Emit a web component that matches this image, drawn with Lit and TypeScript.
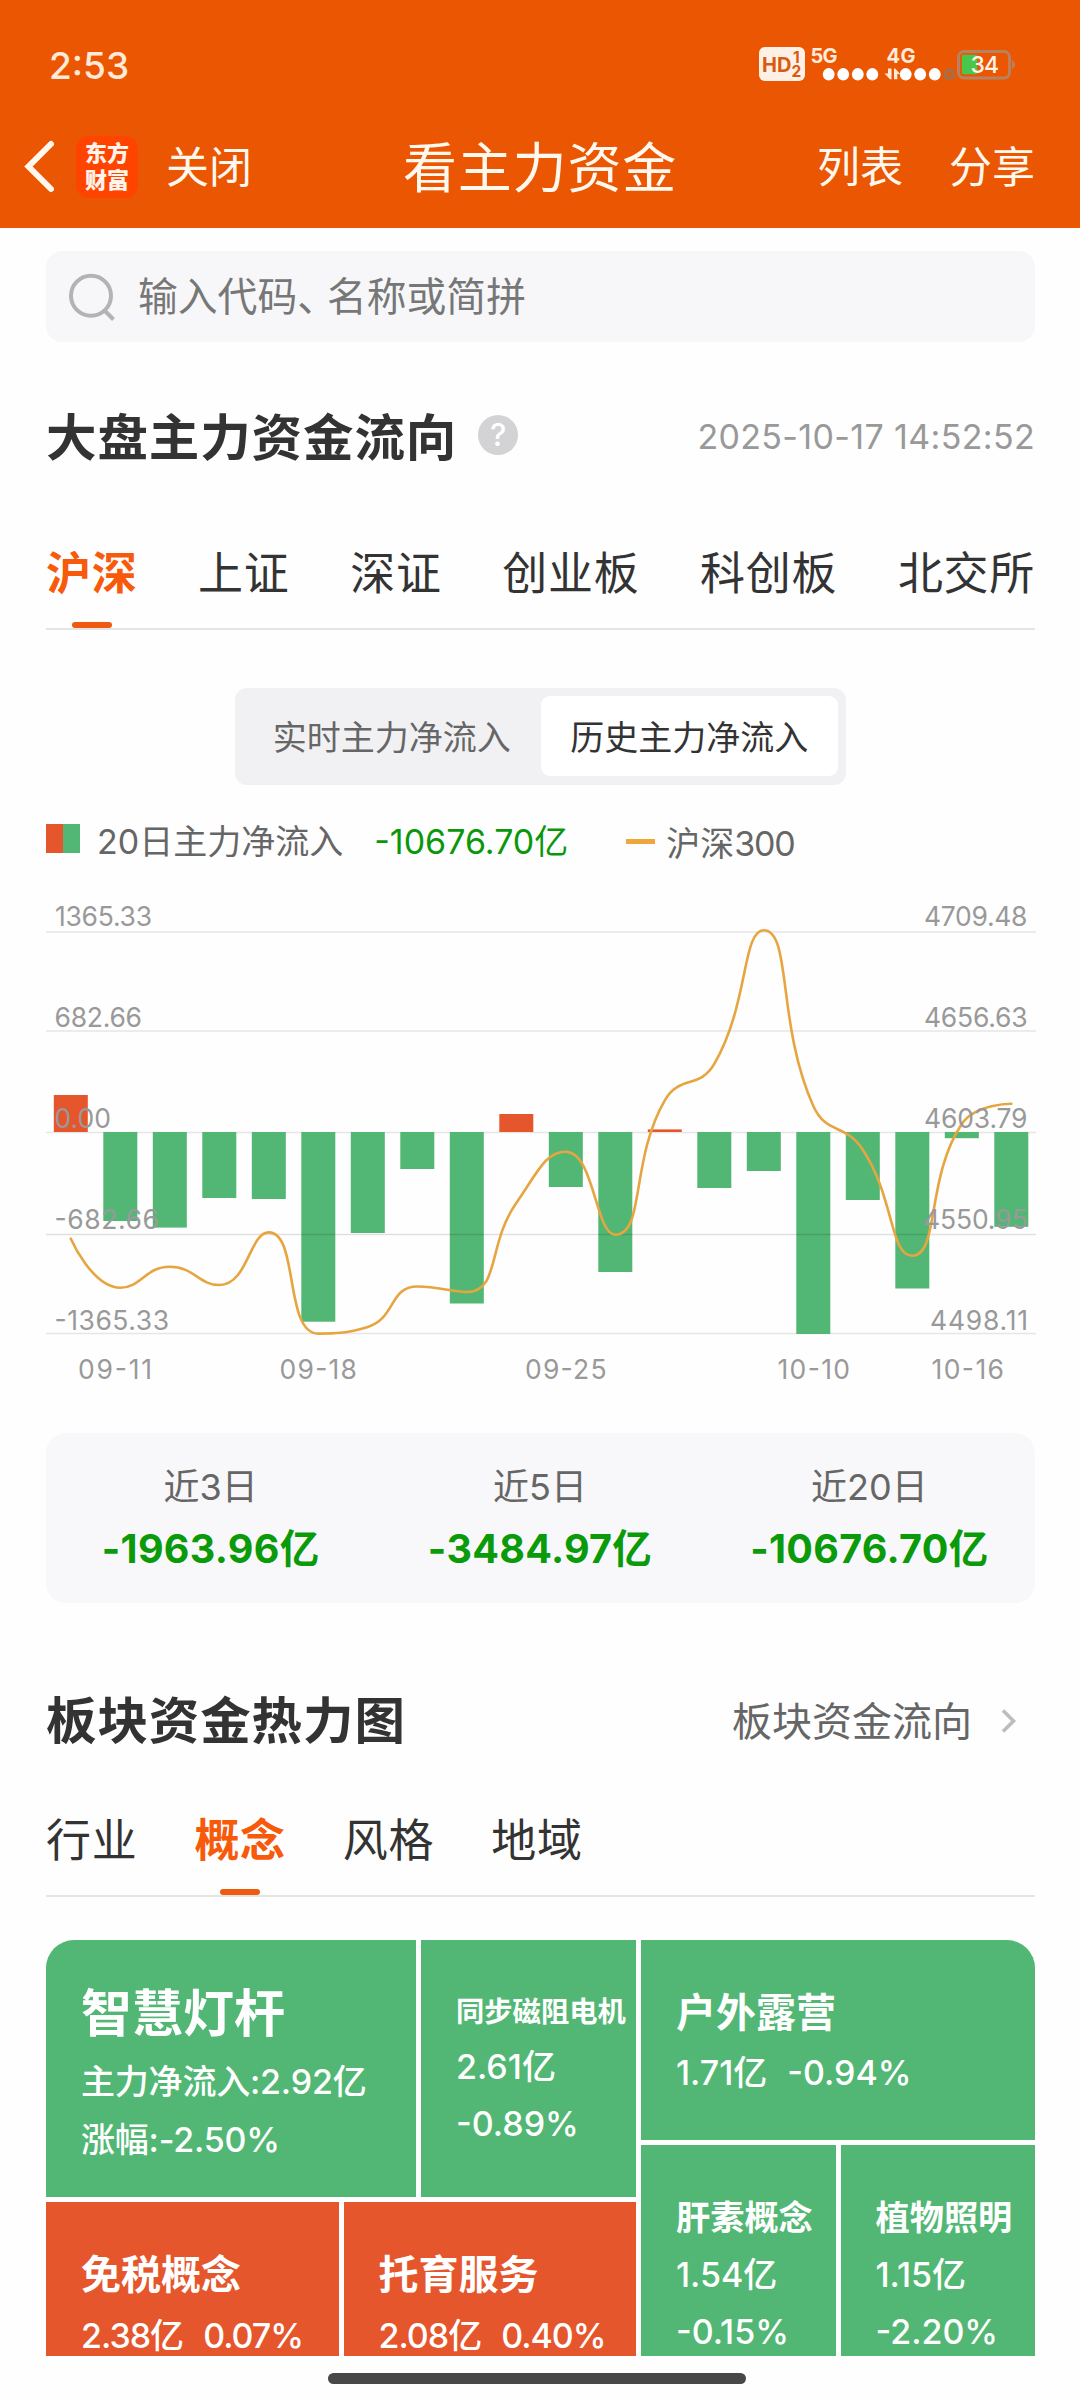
import { LitElement, html, svg, css } from "lit";
import { customElement, property } from "lit/decorators.js";
import { classMap } from "lit/directives/class-map.js";

interface Bar {
  end: number;
  up?: boolean;
}

interface Label {
  text: string;
  x: number;
  y: number;
  w: number;
}

const BASELINE = 1132;
const BAR_X = 53.8;
const BAR_STEP = 49.5;
const BAR_W = 34;

const BARS: Bar[] = [
  { end: 1095, up: true },
  { end: 1221 },
  { end: 1227.6 },
  { end: 1198 },
  { end: 1199 },
  { end: 1321.7 },
  { end: 1233 },
  { end: 1169 },
  { end: 1303.5 },
  { end: 1114, up: true },
  { end: 1187 },
  { end: 1272 },
  { end: 1129.4, up: true },
  { end: 1188 },
  { end: 1171 },
  { end: 1334 },
  { end: 1200 },
  { end: 1288.5 },
  { end: 1138.2 },
  { end: 1226.8 },
];

const INDEX_Y = [
  1238.7, 1287.7, 1266.8, 1285, 1232.4, 1333.6, 1326.9, 1286.5, 1292, 1203,
  1151.7, 1234.7, 1100.3, 1063.9, 930.3, 1106, 1149.7, 1255.7, 1124, 1103.8,
];

const GRID_Y = [932, 1031, 1132.5, 1234.5, 1333.5];

const AXIS_LABELS: Label[] = [
  { text: "1365.33", x: 55, y: 925.5, w: 97 },
  { text: "682.66", x: 54.5, y: 1027, w: 87.5 },
  { text: "0.00", x: 54.5, y: 1128, w: 56.5 },
  { text: "-682.66", x: 54.5, y: 1229, w: 104.5 },
  { text: "-1365.33", x: 54.5, y: 1329.6, w: 114.5 },
  { text: "4709.48", x: 924, y: 925.5, w: 103.5 },
  { text: "4656.63", x: 924, y: 1027, w: 103.5 },
  { text: "4603.79", x: 924, y: 1128, w: 103.5 },
  { text: "4550.95", x: 923, y: 1229, w: 104.5 },
  { text: "4498.11", x: 930, y: 1329.6, w: 98 },
  { text: "09-11", x: 78, y: 1379, w: 74 },
  { text: "09-18", x: 279.5, y: 1379, w: 77.5 },
  { text: "09-25", x: 525, y: 1379, w: 81.5 },
  { text: "10-10", x: 777.5, y: 1379, w: 72.5 },
  { text: "10-16", x: 931.5, y: 1379, w: 72.5 },
];

const between = (v: number, a: number, b: number) =>
  Math.max(Math.min(a, b), Math.min(Math.max(a, b), v));

/** Smooth curve whose control points never overshoot the neighbouring values. */
function smoothPath(pts: [number, number][], smooth = 0.5): string {
  let d = `M${pts[0][0]} ${pts[0][1]}`;
  let out = pts[0];
  for (let i = 1; i < pts.length; i++) {
    const p = pts[i];
    const prev = pts[i - 1];
    const next = pts[i + 1];
    let cin: [number, number] = p;
    let nextOut: [number, number] = p;
    if (next) {
      const lp = Math.hypot(p[0] - prev[0], p[1] - prev[1]);
      const ln = Math.hypot(next[0] - p[0], next[1] - p[1]);
      const r = ln / (ln + lp);
      const vx = next[0] - prev[0];
      const vy = next[1] - prev[1];
      let nx = between(p[0] + vx * smooth * r, p[0], next[0]);
      let ny = between(p[1] + vy * smooth * r, p[1], next[1]);
      const cx = between(p[0] - ((nx - p[0]) * lp) / ln, prev[0], p[0]);
      const cy = between(p[1] - ((ny - p[1]) * lp) / ln, prev[1], p[1]);
      nx = p[0] + ((p[0] - cx) * ln) / lp;
      ny = p[1] + ((p[1] - cy) * ln) / lp;
      cin = [cx, cy];
      nextOut = [nx, ny];
    }
    d += `C${out[0]} ${out[1]} ${cin[0]} ${cin[1]} ${p[0]} ${p[1]}`;
    out = nextOut;
  }
  return d;
}

@customElement("flow-chart")
export class FlowChart extends LitElement {
  static styles = css`
    :host {
      display: block;
    }
    svg {
      display: block;
      width: 990px;
      height: 533px;
    }
    .grid {
      stroke: #e6e6e6;
      stroke-width: 1.6;
    }
    .over {
      stroke: rgba(0, 0, 0, 0.12);
      stroke-width: 1.4;
    }
    .up {
      fill: #e5562d;
    }
    .down {
      fill: #52b774;
    }
    .index {
      fill: none;
      stroke: #e6a540;
      stroke-width: 2.6;
      stroke-linecap: round;
    }
    text {
      font: 400 26.5px Inter, "Noto Sans CJK SC", sans-serif;
      fill: #999;
    }
  `;

  render() {
    const pts = INDEX_Y.map(
      (y, i) => [BAR_X + BAR_W / 2 + i * BAR_STEP, y] as [number, number],
    );
    return html`<svg viewBox="46 867 990 533">
      ${GRID_Y.filter((y) => y !== 1234.5).map(
        (y) => svg`<line class="grid" x1="46" x2="1036" y1=${y} y2=${y} />`,
      )}
      ${BARS.map(
        (b, i) => svg`<rect
          class=${b.up ? "up" : "down"}
          x=${BAR_X + i * BAR_STEP}
          y=${Math.min(b.end, BASELINE)}
          width=${BAR_W}
          height=${Math.abs(b.end - BASELINE)} />`,
      )}
      <line class="over" x1="46" x2="1036" y1="1234.5" y2="1234.5" />
      <path class="index" d=${smoothPath(pts)} />
      ${AXIS_LABELS.map(
        (l) => svg`<text x=${l.x} y=${l.y} textLength=${l.w}>${l.text}</text>`,
      )}
    </svg>`;
  }
}

@customElement("tab-strip")
export class TabStrip extends LitElement {
  @property({ attribute: false }) items: string[] = [];
  @property({ type: Number }) active = 0;
  @property({ type: Boolean }) spread = false;

  static styles = css`
    :host {
      display: block;
    }
    .strip {
      display: flex;
      gap: 57px;
      height: 86px;
      border-bottom: 2px solid #e4e4e4;
    }
    .spread {
      gap: 0;
      justify-content: space-between;
    }
    .tab {
      display: flex;
      flex-direction: column;
      align-items: center;
      justify-content: space-between;
      font-size: 45px;
      letter-spacing: 0.7px;
      line-height: 63px;
      color: #333;
      white-space: nowrap;
    }
    .on {
      color: #f75a0a;
      font-weight: 700;
    }
    .bar {
      width: 40px;
      height: 6px;
      border-radius: 3px;
      background: #f05a10;
    }
  `;

  render() {
    return html`<div class=${classMap({ strip: true, spread: this.spread })}>
      ${this.items.map(
        (t, i) => html`<div class=${classMap({ tab: true, on: i === this.active })}>
          <span>${t}</span>
          ${i === this.active ? html`<span class="bar"></span>` : null}
        </div>`,
      )}
    </div>`;
  }
}

@customElement("app-root")
export class AppRoot extends LitElement {
  static styles = css`
    :host {
      display: block;
      width: 1080px;
      height: 2400px;
      overflow: hidden;
      background: #fefefe;
      color: #333;
      font-family: Inter, "Noto Sans CJK SC", sans-serif;
      white-space: nowrap;
    }
    .header {
      height: 228px;
      background: #ea5602;
      color: #fff8ee;
    }
    .status {
      display: flex;
      justify-content: space-between;
      align-items: center;
      height: 130px;
      padding: 0 60px 0 49px;
    }
    .time {
      font-size: 37px;
      font-weight: 500;
      color: #ffe9d8;
      letter-spacing: 0px;
    }
    .signals {
      width: 262px;
      height: 40px;
    }
    .signals text {
      font-weight: 700;
      fill: #ffeadb;
    }
    .signals .hd {
      fill: #d9590f;
    }
    .signals .level {
      font-weight: 500;
      fill: #fff3ea;
    }
    .nav {
      display: grid;
      grid-template-columns: 1fr auto 1fr;
      align-items: center;
      height: 74px;
      padding: 0 45px 0 24px;
      font-size: 43px;
      line-height: 62px;
    }
    .side {
      display: flex;
      align-items: center;
    }
    .end {
      justify-content: flex-end;
      gap: 46px;
    }
    .back {
      width: 32px;
      height: 56px;
    }
    .logo {
      width: 62px;
      height: 62px;
      margin: 0 28px 0 20px;
      border-radius: 13px;
      background: #ff4400;
      color: #fff3ea;
      display: flex;
      flex-direction: column;
      align-items: center;
      justify-content: center;
      font-size: 22px;
      font-weight: 900;
      line-height: 27px;
    }
    .heading {
      font-size: 54px;
      letter-spacing: 0.8px;
      margin-right: -21px;
      padding-top: 3px;
    }
    .body {
      padding: 23px 45px 0 46px;
    }
    .search {
      display: flex;
      align-items: center;
      height: 91px;
      border-radius: 16px;
      background: #f7f7fa;
      padding-left: 22px;
      gap: 22px;
      color: #777;
      font-size: 39.8px;
      line-height: 62px;
    }
    .search svg {
      width: 48px;
      height: 48px;
    }
    .tight {
      letter-spacing: -10px;
    }
    .row {
      display: flex;
      align-items: center;
      justify-content: space-between;
      height: 60px;
    }
    .row h2 {
      margin: 0;
      font-size: 50.5px;
      letter-spacing: 0.9px;
      line-height: 60px;
      font-weight: 700;
      padding-top: 2px;
    }
    .titled {
      display: flex;
      align-items: center;
      gap: 21px;
    }
    .help {
      width: 40px;
      height: 40px;
      border-radius: 50%;
      background: #d3d3d6;
      color: #fff;
      font-size: 31px;
      font-weight: 500;
      line-height: 40px;
      text-align: center;
      margin-top: -4px;
    }
    .stamp {
      font-size: 34px;
      color: #999;
      letter-spacing: 0.35px;
      padding-bottom: 1px;
    }
    .first {
      margin-top: 65px;
    }
    .tabs1 {
      margin-top: 75px;
    }
    .segment {
      display: flex;
      width: 611px;
      height: 97px;
      box-sizing: border-box;
      margin: 58px auto 0;
      padding: 8px;
      border-radius: 12px;
      background: #f1f1f4;
      font-size: 34px;
      line-height: 83px;
      text-align: center;
      color: #666;
    }
    .segment span {
      flex: 1;
    }
    .segment .on {
      background: #fff;
      border-radius: 9px;
      color: #333;
      height: 80px;
    }
    .legend {
      display: flex;
      align-items: center;
      height: 52px;
      margin-top: 30px;
      font-size: 34px;
      color: #666;
    }
    .swatch {
      width: 34px;
      height: 29px;
      margin: -5px 17px 0 0;
      background: linear-gradient(90deg, #e5562d 50%, #52b774 50%);
    }
    .period {
      margin-top: -3px;
    }
    .total {
      color: #0a980a;
      margin: -3px 58px 0 31px;
    }
    .dash {
      width: 29px;
      height: 5px;
      margin-right: 11px;
      background: #f0a73a;
    }
    .code {
      letter-spacing: -1.2px;
    }
    .stats {
      display: grid;
      grid-template-columns: repeat(3, 1fr);
      height: 170px;
      margin-top: 33px;
      border-radius: 20px;
      background: #f8f8fa;
      text-align: center;
      box-sizing: border-box;
      padding: 29px 1px 0 0;
    }
    .stats div {
      font-size: 36px;
      line-height: 50px;
      color: #666;
    }
    .stats b {
      display: block;
      margin-top: 12px;
      font-size: 39.5px;
      letter-spacing: 0.3px;
      font-weight: 700;
      color: #0a9a0a;
    }
    .second {
      margin-top: 87px;
    }
    .more {
      display: flex;
      align-items: center;
      gap: 28px;
      font-size: 40px;
      color: #666;
      padding-right: 17px;
    }
    .more span {
      padding-bottom: 3px;
    }
    .more svg {
      width: 18px;
      height: 26px;
    }
    .tabs2 {
      margin-top: 59px;
    }
    .heat {
      display: grid;
      grid-template-columns: 590px 394px;
      gap: 5px;
      height: 416px;
      margin-top: 43px;
      overflow: hidden;
      border-radius: 28px 28px 0 0;
      color: #fff;
      font-size: 34px;
      font-weight: 500;
      line-height: 57px;
    }
    .half {
      display: flex;
      flex-direction: column;
      gap: 5px;
      overflow: hidden;
    }
    .line {
      display: flex;
      gap: 5px;
      flex: 1;
      min-height: 0;
    }
    .tall {
      flex: 0 0 257px;
    }
    .short {
      flex: 0 0 200px;
    }
    .cell {
      flex: 1;
      box-sizing: border-box;
      padding: 44px 0 0 35px;
      background: #52b774;
      overflow: hidden;
    }
    .red {
      background: #e5562d;
    }
    .lead {
      flex: 0 0 370px;
      line-height: 58px;
      letter-spacing: -0.2px;
    }
    .cell h3 {
      margin: 0;
      font-size: 40px;
      line-height: 58px;
      font-weight: 700;
    }
    .lead h3 {
      font-size: 51px;
      line-height: 60px;
      margin-bottom: 9px;
      letter-spacing: 0;
    }
    .cell .xs {
      font-size: 28.3px;
      line-height: 56px;
      margin-bottom: -2px;
    }
    .cell .sm {
      font-size: 34.2px;
      line-height: 60px;
      margin-bottom: -2px;
    }
    .gap1 {
      padding-top: 43px;
    }
    .gap2 {
      padding-top: 44px;
      line-height: 64px;
    }
    .pair {
      display: flex;
      gap: 20px;
    }
    .short .pair {
      padding-top: 2px;
    }
    .gap2 .pair {
      letter-spacing: -1px;
    }
    .home {
      width: 418px;
      height: 11px;
      margin: 17px auto 0 282px;
      border-radius: 6px;
      background: #484848;
    }
  `;

  private signals() {
    return html`<svg class="signals" viewBox="758 45 262 40">
      <rect x="759" y="47" width="46" height="34" rx="6" fill="#fff0e6" />
      <text class="hd" x="762" y="71.5" font-size="20">HD<tspan x="793" y="62.8" font-size="15.5">1</tspan><tspan x="791.5" y="77.3" font-size="15.5">2</tspan></text>
      <text x="810.5" y="62.5" font-size="20" textLength="27">5G</text>
      <text x="886.5" y="62.5" font-size="20" textLength="29">4G</text>
      ${[828.7, 843.2, 857.8, 872.3, 905.7, 920.2, 934.8].map(
        (x) => svg`<ellipse cx=${x} cy="74.3" rx="5.9" ry="6.2" fill="#fff" />`,
      )}
      <circle cx="949.3" cy="74.3" r="4.2" fill="none" stroke="#a1704c" stroke-width="3.2" />
      <path d="M884.5 73.5H888V68.5H891.5V79.3H890zM894 79.3V68.5H895.2L900 74H897.3V79.3z" fill="#ffeadb" />
      <rect x="958.5" y="51.5" width="51" height="26.5" rx="5.5" fill="none" stroke="#ba8161" stroke-width="3" />
      <path d="M1012.5 60.5q4 4 0 8z" fill="#ba8161" stroke="#ba8161" />
      <rect x="961.8" y="54.8" width="15.5" height="19.5" rx="1.5" fill="#49c64b" />
      <text class="level" x="970.5" y="73.3" font-size="23" textLength="28.5">34</text>
    </svg>`;
  }

  render() {
    return html`
      <div class="header">
        <div class="status"><span class="time">2:53</span>${this.signals()}</div>
        <div class="nav">
          <div class="side">
            <svg class="back" viewBox="24 139 32 56">
              <path d="M51 144L28.5 166.5L51 189" fill="none" stroke="#fff8ee" stroke-width="6" stroke-linecap="round" stroke-linejoin="miter" />
            </svg>
            <div class="logo"><span>东方</span><span>财富</span></div>
            <span>关闭</span>
          </div>
          <span class="heading">看主力资金</span>
          <div class="side end"><span>列表</span><span>分享</span></div>
        </div>
      </div>
      <div class="body">
        <div class="search">
          <svg viewBox="68 273 48 48">
            <circle cx="91" cy="295.7" r="20" fill="none" stroke="#b3b3b5" stroke-width="4" />
            <path d="M105 311L113.5 319.5" stroke="#b3b3b5" stroke-width="4" />
          </svg>
          <span>输入代码<span class="tight">、</span>名称或简拼</span>
        </div>
        <div class="row first">
          <div class="titled"><h2>大盘主力资金流向</h2><span class="help">?</span></div>
          <span class="stamp">2025-10-17 14:52:52</span>
        </div>
        <tab-strip class="tabs1" spread .items=${["沪深", "上证", "深证", "创业板", "科创板", "北交所"]} .active=${0}></tab-strip>
        <div class="segment"><span>实时主力净流入</span><span class="on">历史主力净流入</span></div>
        <div class="legend">
          <span class="swatch"></span><span class="period">20日主力净流入</span>
          <span class="total">-10676.70亿</span>
          <span class="dash"></span><span>沪深<span class="code">300</span></span>
        </div>
        <flow-chart></flow-chart>
        <div class="stats">
          <div>近3日<b>-1963.96亿</b></div>
          <div>近5日<b>-3484.97亿</b></div>
          <div>近20日<b>-10676.70亿</b></div>
        </div>
        <div class="row second">
          <h2>板块资金热力图</h2>
          <div class="more">
            <span>板块资金流向</span>
            <svg viewBox="1001 1709 18 26">
              <path d="M1004 1712.5L1014.5 1723L1004 1733.5" fill="none" stroke="#bdbdbd" stroke-width="3.6" />
            </svg>
          </div>
        </div>
        <tab-strip class="tabs2" .items=${["行业", "概念", "风格", "地域"]} .active=${1}></tab-strip>
        <div class="heat">
          <div class="half">
            <div class="line tall">
              <div class="cell lead">
                <h3>智慧灯杆</h3>
                <div>主力净流入:2.92亿</div>
                <div>涨幅:-2.50%</div>
              </div>
              <div class="cell">
                <h3 class="xs">同步磁阻电机</h3>
                <div>2.61亿</div>
                <div>-0.89%</div>
              </div>
            </div>
            <div class="line">
              <div class="cell red gap2">
                <h3>免税概念</h3>
                <div class="pair"><span>2.38亿</span><span>0.07%</span></div>
              </div>
              <div class="cell red gap2">
                <h3>托育服务</h3>
                <div class="pair"><span>2.08亿</span><span>0.40%</span></div>
              </div>
            </div>
          </div>
          <div class="half">
            <div class="line short">
              <div class="cell">
                <h3>户外露营</h3>
                <div class="pair"><span>1.71亿</span><span>-0.94%</span></div>
              </div>
            </div>
            <div class="line">
              <div class="cell gap1">
                <h3 class="sm">肝素概念</h3>
                <div>1.54亿</div>
                <div>-0.15%</div>
              </div>
              <div class="cell gap1">
                <h3 class="sm">植物照明</h3>
                <div>1.15亿</div>
                <div>-2.20%</div>
              </div>
            </div>
          </div>
        </div>
        <div class="home"></div>
      </div>
    `;
  }
}
